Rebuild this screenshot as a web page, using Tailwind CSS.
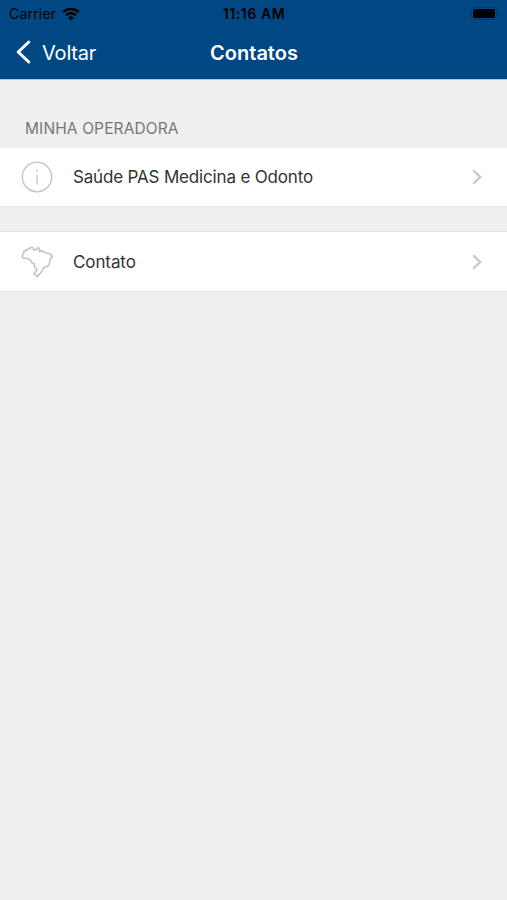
<!DOCTYPE html>
<html lang="pt-BR">
<head>
  <meta charset="UTF-8" />
  <meta name="viewport" content="width=device-width, initial-scale=1.0" />
  <title>Contatos</title>
  <script src="https://cdn.jsdelivr.net/npm/@tailwindcss/browser@4"></script>
</head>
<body class="min-h-screen bg-[#efefef] font-[Inter,sans-serif] text-[#333333]">

  <header class="h-[80px] bg-[#004884] border-b border-[#a9c6d6]">
    <!-- Status bar -->
    <div class="h-[27px] grid grid-cols-3 items-center pl-[9px] pr-2 text-[14px] leading-none text-black">
      <div class="flex items-center gap-[6px]">
        <span class="tracking-[0.2px]">Carrier</span>
        <svg class="w-[18px] h-[14px]" viewBox="0 0 18 14" fill="none" stroke="#000" stroke-width="2.5">
          <path d="M1.2 5.2a11 11 0 0 1 15.6 0" />
          <path d="M4 8.3a7.1 7.1 0 0 1 10 0" />
          <path d="M9 13.5 6.2 10.7a4 4 0 0 1 5.6 0Z" fill="#000" stroke="none" />
        </svg>
      </div>
      <span class="text-center font-semibold tracking-[0.6px]">11:16 AM</span>
      <svg class="w-[28px] h-[13px] justify-self-end" viewBox="0 0 28 13">
        <rect x="0.5" y="0.5" width="25" height="12" rx="3" fill="none" stroke="#003967" />
        <rect x="2" y="2" width="22" height="9" rx="1.5" fill="#000" />
        <path d="M27 4.5q1.2 2 0 4z" fill="#003967" />
      </svg>
    </div>

    <!-- Navigation -->
    <nav class="h-[50px] grid grid-cols-3 items-center pl-4 pr-[15px] text-[20px] leading-none text-white">
      <a href="#" class="flex items-center gap-[11px]">
        <svg class="w-[15px] h-[24px]" viewBox="0 0 15 24" fill="none" stroke="#fff" stroke-width="3" stroke-linecap="round" stroke-linejoin="round">
          <path d="M12.8 2 2.2 12l10.6 10" />
        </svg>
        <span class="pt-px tracking-[-0.2px]">Voltar</span>
      </a>
      <h1 class="pt-px text-center font-semibold">Contatos</h1>
    </nav>
  </header>

  <main>
    <h2 class="h-[68px] pt-[41px] pl-[25px] text-[15.5px] leading-4 tracking-[0.12px] text-[#777777]">MINHA OPERADORA</h2>

    <a href="#" class="flex items-center h-[59px] pl-[21px] pr-[25px] bg-white border-b border-[#e3e3e3]">
      <svg class="w-8 h-8" viewBox="0 0 32 32" fill="none" stroke="#c8c8c8" stroke-width="1.5">
        <circle cx="16" cy="16" r="14.7" />
        <path d="M16 13.5v10" />
        <circle cx="16" cy="9.5" r="1.1" fill="#c8c8c8" stroke="none" />
      </svg>
      <span class="ml-5 pt-0.5 text-[17px] tracking-[-0.17px]">Saúde PAS Medicina e Odonto</span>
      <svg class="ml-auto w-[10px] h-4" viewBox="0 0 10 16" fill="none" stroke="#c7c7cc" stroke-width="2.3">
        <path d="m1.2 1.2 7 6.8-7 6.8" />
      </svg>
    </a>

    <a href="#" class="flex items-center mt-6 h-[61px] pl-[21px] pr-[25px] bg-white border-y border-[#e3e3e3]">
      <svg class="w-8 h-8" viewBox="0 0 32 32" fill="none" stroke="#c4c4c4" stroke-width="1.6" stroke-linejoin="round">
        <path d="M2.8 5.2 5.6 4.7 5.2 3.4 8.3 3 9.6 1.2 12.4 2 12.8 4.3 16.2 3.2 17.3 1.4 18.9 4.2 18.2 5.8 21.5 5 24 6.4 29.6 8 31.2 10.5 28.9 13.8 28.2 18.5 26.6 20.3 22.6 21.8 20.8 25.5 18.6 28 16.2 30.8 14.6 28.6 12.9 27.7 15.8 24.2 15.4 22.5 13.2 20.4 13.3 17.6 10.6 16.7 9.8 14.3 5.8 12.3 2.2 12.1 1 9.8 2.7 8Z" />
      </svg>
      <span class="ml-5 pt-0.5 text-[17px] tracking-[-0.1px]">Contato</span>
      <svg class="ml-auto w-[10px] h-4" viewBox="0 0 10 16" fill="none" stroke="#c7c7cc" stroke-width="2.3">
        <path d="m1.2 1.2 7 6.8-7 6.8" />
      </svg>
    </a>
  </main>

</body>
</html>
